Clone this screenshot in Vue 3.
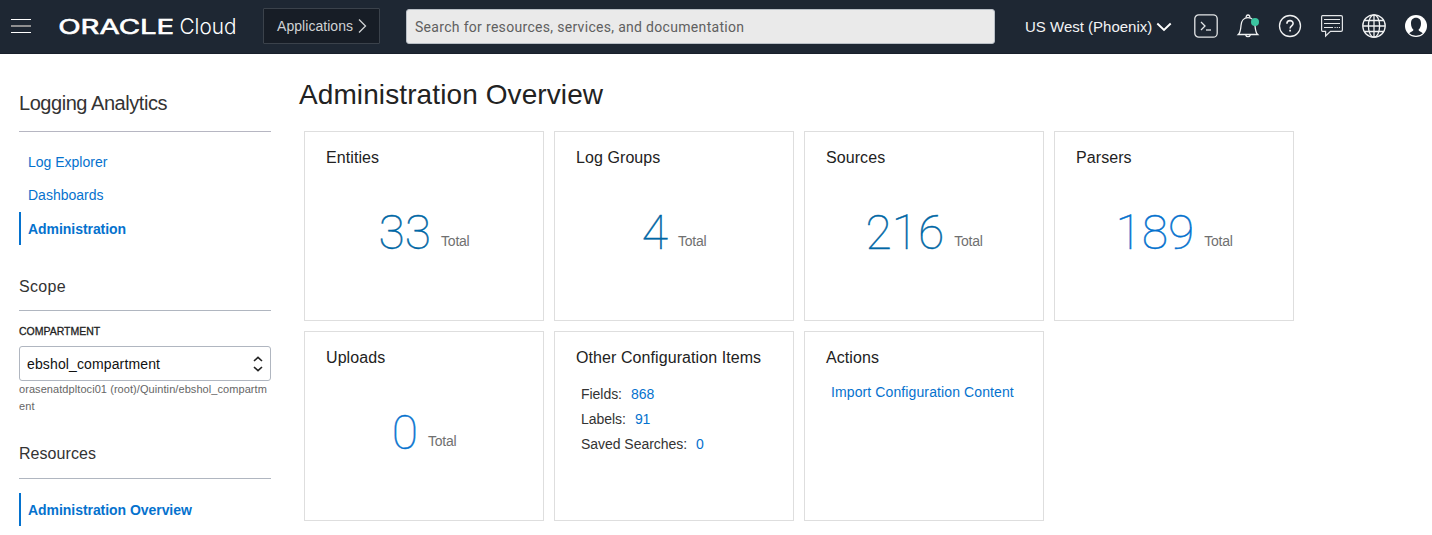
<script setup>
const links = [
  { label: 'Log Explorer' },
  { label: 'Dashboards' },
  { label: 'Administration', active: true },
]
const totals = [
  { title: 'Entities', value: '33', visited: true },
  { title: 'Log Groups', value: '4', visited: true },
  { title: 'Sources', value: '216', visited: true },
  { title: 'Parsers', value: '189' },
  { title: 'Uploads', value: '0' },
]
const config = [
  { label: 'Fields:', value: '868' },
  { label: 'Labels:', value: '91' },
  { label: 'Saved Searches:', value: '0' },
]
</script>

<template>
  <div class="page">
    <header class="topbar">
      <div class="burger"><i></i><i class="dim"></i><i></i></div>
      <svg class="logo" width="180" height="30" viewBox="0 0 180 30">
        <text class="brand" x="-0.800" y="22" textLength="116" lengthAdjust="spacingAndGlyphs">ORACLE</text>
        <text class="cloud" x="120.500" y="22" textLength="57" lengthAdjust="spacingAndGlyphs">Cloud</text>
      </svg>
      <button class="apps">
        Applications
        <svg width="9" height="16" viewBox="0 0 9 16"><path d="M1 1.5L7.5 8L1 14.5" fill="none" stroke="#d0d2d4" stroke-width="1.3" /></svg>
      </button>
      <div class="search">Search for resources, services, and documentation</div>
      <div class="region">
        US West (Phoenix)
        <svg width="16" height="10" viewBox="0 0 16 10"><path d="M1.3 1.5L8 8L14.7 1.5" fill="none" stroke="#fff" stroke-width="1.9" /></svg>
      </div>
      <div class="icons">
        <svg width="24" height="24" viewBox="0 0 24 24" fill="none" stroke="#e4e6e8" stroke-width="1.3">
          <rect x="0.8" y="0.8" width="22.4" height="22.4" rx="4" />
          <path d="M7 8L11 12L7 16" />
          <path d="M12 16H17" />
        </svg>
        <svg width="24" height="24" viewBox="0 0 24 24" fill="none" stroke="#f0f1f2" stroke-width="1.3">
          <path d="M2.3 20.5C4.5 18.5 4.6 16 5 11.500C5.300 6.500 8.300 3.700 12 3.700S18.700 6.500 19 11.500C19.400 16 19.500 18.500 21.700 20.500Z" />
          <path d="M10.400 3.600A1.800 1.800 0 1 1 13.600 3.600M9.700 21A2.400 2.400 0 0 0 14.300 21" />
          <circle cx="19" cy="8" r="4" fill="#3bc4a0" stroke="none" />
        </svg>
        <svg width="24" height="24" viewBox="0 0 24 24" fill="none" stroke="#f0f1f2" stroke-width="1.3">
          <circle cx="12" cy="12" r="10.500" />
          <path d="M8.900 9.700C8.900 5.600 15.200 5.600 15.100 9.500C15 11.800 12.100 11.900 12.100 14.500" stroke-width="1.6" />
          <path d="M12.100 15.800V17.600" stroke-width="1.700" />
        </svg>
        <svg width="24" height="24" viewBox="0 0 24 24" fill="none" stroke="#e4e6e8" stroke-width="1.200">
          <path d="M2.500 1.600H21Q22.400 1.600 22.400 3V16Q22.400 17.400 21 17.400H10.500L5.600 22V17.400H2.500Q1.600 17.400 1.600 16V3Q1.600 1.600 2.500 1.600Z" />
          <path d="M4 5.500H20M4 9.500H20M4 13.500H13" />
          <path d="M14.500 13.500H20" stroke-dasharray="1.200 1" />
        </svg>
        <svg width="24" height="24" viewBox="0 0 24 24" fill="none" stroke="#f0f1f2" stroke-width="1.300">
          <circle cx="12" cy="12" r="11.200" />
          <ellipse cx="12" cy="12" rx="5.600" ry="11.200" />
          <path d="M12 0.800V23.200M0.800 12H23.200M2.500 6.500H21.500M2.500 17.500H21.500" />
        </svg>
        <svg width="24" height="24" viewBox="0 0 24 24">
          <circle cx="12" cy="12" r="11" fill="#fff" />
          <path d="M12 3.800C15.300 3.800 17 6 17 9.500C17 12.500 15.900 14.600 14.500 15.800C14.600 17.500 17.200 17.800 18.800 19.200A10 10 0 0 1 5.200 19.200C6.800 17.800 9.400 17.500 9.500 15.800C8.100 14.600 7 12.500 7 9.500C7 6 8.700 3.800 12 3.800Z" fill="#1e2733" />
        </svg>
      </div>
    </header>

    <div class="body">
      <aside>
        <h2>Logging Analytics</h2>
        <nav>
          <a v-for="l in links" :key="l.label" :class="{ active: l.active }">{{ l.label }}</a>
        </nav>
        <h3 class="scope">Scope</h3>
        <div class="label">COMPARTMENT</div>
        <div class="select">
          ebshol_compartment
          <svg width="10" height="16" viewBox="0 0 10 16" fill="none" stroke="#222" stroke-width="1.600"><path d="M1 5L5 1.300L9 5M1 11L5 14.700L9 11" /></svg>
        </div>
        <div class="path">orasenatdpltoci01 (root)/Quintin/ebshol_compartment</div>
        <h3 class="resources">Resources</h3>
        <nav><a class="active overview">Administration Overview</a></nav>
      </aside>

      <main>
        <h1>Administration Overview</h1>
        <div class="grid">
          <section v-for="t in totals" :key="t.title" class="card">
            <h4>{{ t.title }}</h4>
            <div class="total">
              <span class="num" :class="{ visited: t.visited }">{{ t.value }}</span>
              <span class="unit">Total</span>
            </div>
          </section>
          <section class="card">
            <h4>Other Configuration Items</h4>
            <ul>
              <li v-for="c in config" :key="c.label">{{ c.label }}<a>{{ c.value }}</a></li>
            </ul>
          </section>
          <section class="card">
            <h4>Actions</h4>
            <a class="import">Import Configuration Content</a>
          </section>
        </div>
      </main>
    </div>
  </div>
</template>

<style>
body { background: #fff; }
</style>

<style scoped>
.page {
  width: 1432px;
  height: 535px;
  overflow: hidden;
  font-family: "Liberation Sans", Arial, sans-serif;
  font-size: 14px;
  color: #222;
}
.page * { box-sizing: border-box; }
h1, h2, h3, h4, ul { margin: 0; padding: 0; font-weight: 400; }
a { color: #0572ce; }

.topbar {
  display: flex;
  height: 54px;
  background: #1e2733;
  border-bottom: 1px solid #18202b;
}
.burger {
  display: flex;
  flex-direction: column;
  gap: 6px;
  width: 20px;
  margin: 19px 0 0 11px;
}
.burger i { height: 1px; background: #fff; }
.burger .dim { height: 2px; margin-top: -1px; background: #8f8f90; }
.burger .dim + i { margin-top: -1px; }
.logo { margin: 12px 0 0 28px; overflow: visible; }
.brand { font-family: Inter, sans-serif; font-size: 20.5px; font-weight: 400; fill: #fff; stroke: #fff; stroke-width: 0.6px; }
.cloud { font-family: Inter, sans-serif; font-size: 21.5px; font-weight: 300; fill: #fff; }
.apps {
  display: flex;
  align-items: center;
  gap: 5px;
  width: 117px;
  height: 36px;
  margin: 8px 0 0 24px;
  padding: 0 0 0 13px;
  border: 1px solid #3b424b;
  border-radius: 1px;
  background: #171d26;
  font: 14px "Liberation Sans", Arial, sans-serif;
  letter-spacing: 0.05px;
  color: #d0d2d4;
}
.search {
  width: 589px;
  height: 35px;
  margin: 9px 0 0 26px;
  padding-left: 8px;
  border: 1px solid #b9bfc6;
  border-radius: 3px;
  background: #eaeaea;
  font-family: Roboto, sans-serif;
  font-size: 14px;
  line-height: 35px;
  letter-spacing: 0.31px;
  white-space: nowrap;
  color: #606060;
}
.region {
  display: flex;
  align-items: center;
  gap: 4px;
  height: 53px;
  margin-left: 30px;
  width: 169px;
  font-size: 15px;
  white-space: nowrap;
  color: #f3f4f5;
}
.icons { display: flex; align-items: center; gap: 18px; height: 52px; }
.icons svg { flex: none; }

.body { display: flex; }
aside { width: 252px; margin: 36px 0 0 19px; }
h2 {
  padding-bottom: 15px;
  border-bottom: 1px solid #b6b6c2;
  font-size: 20px;
  line-height: 26px;
  letter-spacing: -0.45px;
  color: #333;
}
nav { display: flex; flex-direction: column; margin-top: 14px; }
nav a { height: 33px; padding-left: 9px; line-height: 33px; }
nav .active { padding-left: 7px; border-left: 2px solid #0572ce; font-weight: 700; line-height: 35px; letter-spacing: -0.05px; }
h3 {
  height: 35px;
  border-bottom: 1px solid #b0b6c0;
  font-size: 16px;
  line-height: 20px;
  letter-spacing: 0.05px;
  color: #333;
}
.scope { margin-top: 31px; line-height: 22px; letter-spacing: 0.35px; }
.label {
  margin-top: 13px;
  font-size: 10.5px;
  line-height: 15px;
  -webkit-text-stroke: 0.3px #222;
}
.select {
  display: flex;
  align-items: center;
  justify-content: space-between;
  height: 35px;
  margin-top: 7px;
  padding: 0 7px;
  border: 1px solid #b0b6c0;
  border-radius: 3px;
  letter-spacing: 0.13px;
  color: #111;
}
.path { font-size: 11px; line-height: 17px; letter-spacing: 0.07px; word-break: break-all; color: #666; }
.resources { margin-top: 29px; }

main { margin-left: 28px; }
h1 {
  height: 77px;
  padding-top: 24px;
  font-size: 28px;
  line-height: 34px;
  letter-spacing: 0.1px;
}
.grid {
  display: grid;
  grid-template-columns: repeat(4, 240px);
  grid-auto-rows: 190px;
  gap: 10px;
  margin-left: 5px;
}
.card { border: 1px solid #dedede; }
h4 { padding: 16px 0 0 21px; font-size: 16px; line-height: 20px; letter-spacing: 0.08px; }
.total {
  display: flex;
  justify-content: center;
  height: 62px;
  margin-top: 34px;
}
.num {
  margin-right: 10px;
  font-family: Roboto, sans-serif;
  font-size: 48px;
  font-weight: 100;
  line-height: 61px;
  color: #0572ce;
  -webkit-text-stroke: 0.4px currentColor;
}
.num.visited { color: #0067a5; }
.unit { line-height: 79px; color: #707070; letter-spacing: -0.25px; }
ul { margin: 14px 0 0 26px; list-style: none; }
li { height: 25px; line-height: 25px; color: #333; letter-spacing: -0.04px; }
li a { margin-left: 9px; }
.import { display: block; margin: 14px 0 0 26px; line-height: 20px; letter-spacing: 0.11px; }
</style>
